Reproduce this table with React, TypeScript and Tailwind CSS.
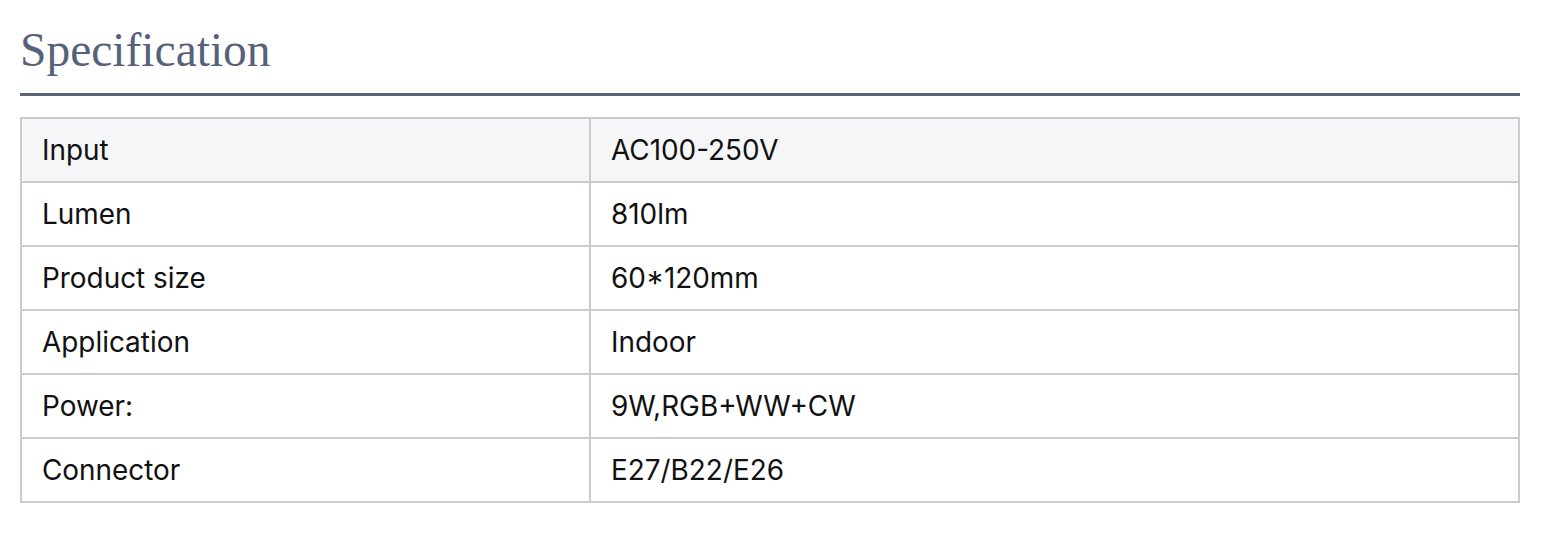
const rows: [string, string][] = [
  ["Input", "AC100-250V"],
  ["Lumen", "810lm"],
  ["Product size", "60*120mm"],
  ["Application", "Indoor"],
  ["Power:", "9W,RGB+WW+CW"],
  ["Connector", "E27/B22/E26"],
]

export default function App() {
  return (
    <div className="w-[1566px] h-[540px] bg-white px-5">
      <div className="w-[1500px]">
        <h2 className="pt-[22px] pb-[14px] text-[47.5px] leading-[57px] text-[#566279] font-['Liberation_Serif',serif]">
          Specification
        </h2>
        <div className="h-[3px] bg-[#586479]" />
        <table className="mt-[21px] w-full border-collapse border-2 border-[#cbcbcb] font-['Inter',sans-serif] text-[27.9px] text-[#111]">
          <tbody>
            {rows.map(([k, v], i) => (
              <tr key={k} className={i === 0 ? "bg-[#f5f6f8]" : ""}>
                <td className="w-[569px] h-[64px] border-2 border-[#cbcbcb] px-[20px] pt-[2px] pb-0">{k}</td>
                <td className="h-[64px] border-2 border-[#cbcbcb] px-[20px] pt-[2px] pb-0">{v}</td>
              </tr>
            ))}
          </tbody>
        </table>
      </div>
    </div>
  )
}
